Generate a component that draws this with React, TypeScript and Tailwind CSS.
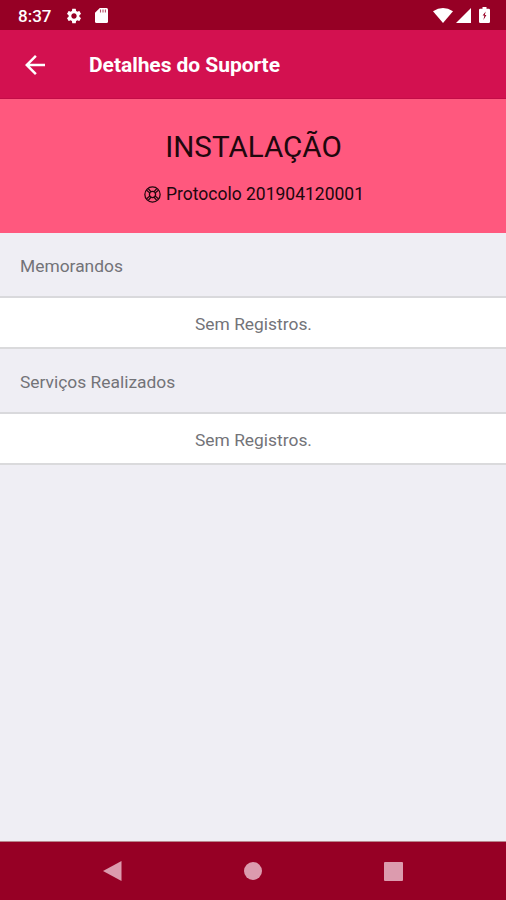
import { MdArrowBack, MdSettings } from 'react-icons/md'

const sections = [
  { title: 'Memorandos', message: 'Sem Registros.' },
  { title: 'Serviços Realizados', message: 'Sem Registros.' },
]

function BuoyIcon() {
  return (
    <svg className="h-[17px] w-[17px] shrink-0" viewBox="0 0 16 16" fill="none" stroke="currentColor" strokeWidth="1.2">
      <circle cx="8" cy="8" r="7.2" />
      <circle cx="8" cy="8" r="2.9" />
      <path d="M6.7 5.6L4 2.5M5.6 6.7L2.5 4M9.3 5.6L12 2.5M10.4 6.7L13.5 4M6.7 10.4L4 13.5M5.6 9.3L2.5 12M9.3 10.4L12 13.5M10.4 9.3L13.5 12" />
    </svg>
  )
}

function StatusBar() {
  return (
    <div className="flex h-[30px] items-center bg-[#960025] pr-4 pl-[18px] text-white">
      <span className="w-[47px] pt-0.5 text-[17px] leading-5 font-medium">8:37</span>
      <MdSettings className="mt-px h-[18px] w-[18px]" />
      <svg className="mt-px ml-3 h-[15px] w-[13px]" viewBox="0 0 13 15">
        <path fill="currentColor" d="M4.8 0H11.5Q13 0 13 1.5V13.5Q13 15 11.5 15H1.5Q0 15 0 13.5V4.8Z" />
        <path stroke="#960025" strokeOpacity="0.7" strokeWidth="1.1" d="M5.5 1.5V4.5M8 1.5V4.5M10.4 1.5V4.5" />
      </svg>
      <div className="ml-auto flex items-center">
        <svg className="h-[15px] w-5" viewBox="0 0 20 15">
          <path fill="currentColor" d="M0 3.2Q10 -3 20 3.2L10 15Z" />
        </svg>
        <svg className="ml-[3px] h-[15px] w-[15px]" viewBox="0 0 15 15">
          <path fill="currentColor" d="M15 0V15H0Z" />
        </svg>
        <svg className="ml-2 h-4 w-[11px]" viewBox="0 0 11 16">
          <path fill="currentColor" d="M3.5 0H7.5V1.7H9.7Q11 1.7 11 3V14.7Q11 16 9.7 16H1.3Q0 16 0 14.7V3Q0 1.7 1.3 1.7H3.5Z" />
          <path fill="#960025" d="M6.7 4.5L3.6 8.6H5.4L4.4 13L7.4 8H5.8Z" />
        </svg>
      </div>
    </div>
  )
}

function Header() {
  return (
    <header className="flex h-[69px] items-center border-b border-[#c20d47] bg-[#d31150] pl-5 text-white">
      <MdArrowBack className="mt-px h-[30px] w-[30px]" />
      <h1 className="ml-[39px] pt-1 text-[21px] font-bold tracking-[-0.05px]">Detalhes do Suporte</h1>
    </header>
  )
}

function NavigationBar() {
  return (
    <nav className="border-t border-[#b8858c] bg-[#960025]">
      <div className="flex h-[58px] items-center text-[#dc9bae]">
        <svg className="ml-[103px] h-5 w-[19px]" viewBox="0 0 19 20">
          <path fill="currentColor" d="M0 10L18.5 0V20Z" />
        </svg>
        <div className="ml-[122px] h-[18px] w-[18px] rounded-full bg-current" />
        <div className="ml-[122px] h-[19px] w-[19px] rounded-[1px] bg-current" />
      </div>
    </nav>
  )
}

export default function App() {
  return (
    <div className="flex h-screen flex-col bg-[#efeef4] font-[Roboto,sans-serif]">
      <StatusBar />
      <Header />
      <main className="flex-1">
        <div className="flex h-[134px] flex-col items-center bg-[#ff587e] pt-[30px] text-[#20070d]">
          <h2 className="pl-px text-[29.6px] leading-9">INSTALAÇÃO</h2>
          <div className="mt-[17px] flex items-center gap-[5px] pl-0.5">
            <BuoyIcon />
            <span className="text-[17.5px] leading-6">Protocolo 201904120001</span>
          </div>
        </div>
        {sections.map((section) => (
          <section key={section.title} className="text-[17.4px] text-[#737378]">
            <h3 className="flex h-[65px] items-center border-b-2 border-[#d9d9dc] pt-[3px] pl-5">{section.title}</h3>
            <p className="flex h-[51px] items-center justify-center border-b-2 border-[#dadadc] bg-white pt-[3px] pl-px">
              {section.message}
            </p>
          </section>
        ))}
      </main>
      <NavigationBar />
    </div>
  )
}
